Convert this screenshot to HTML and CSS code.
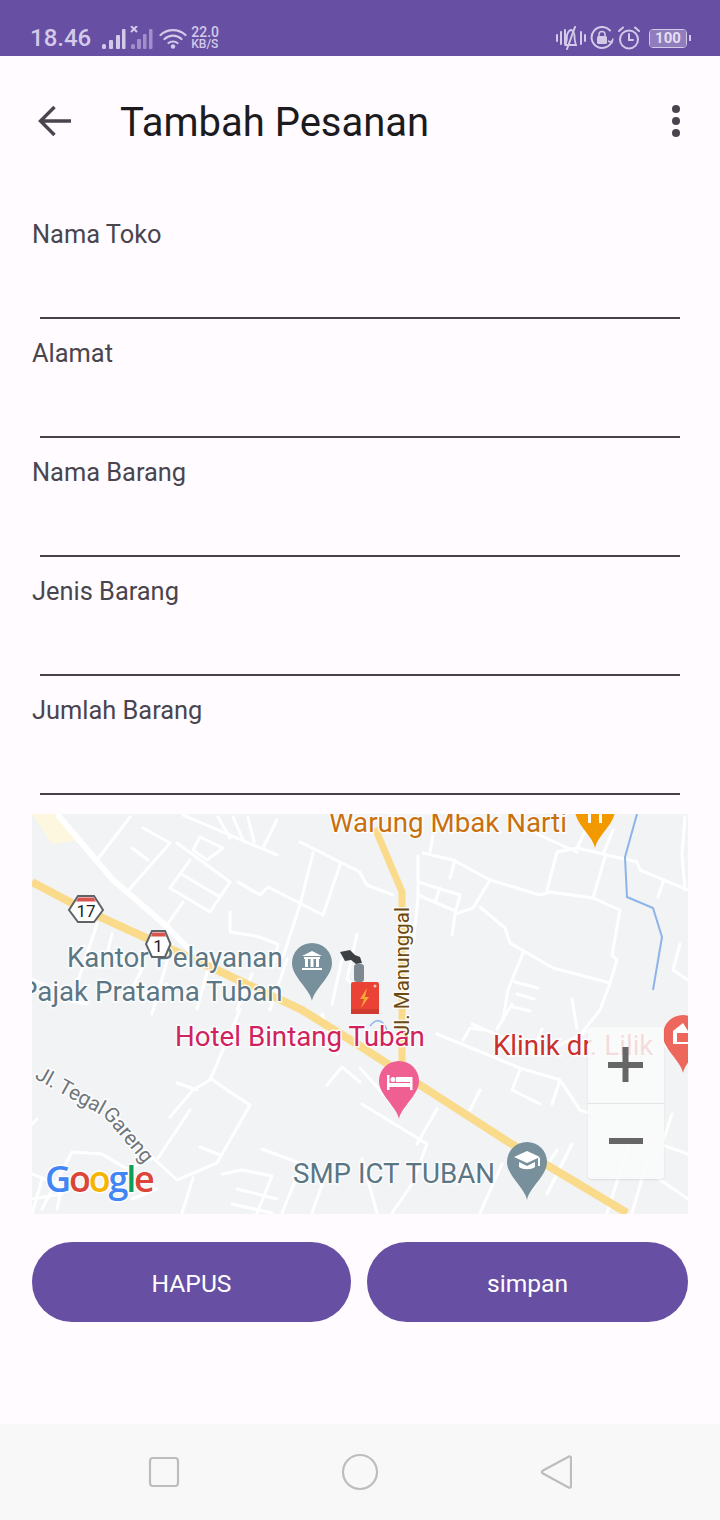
FILE: index.html
```html
<!DOCTYPE html>
<html lang="en">
<head>
    <meta charset="UTF-8">
    <meta name="viewport" content="width=device-width, initial-scale=1.0">
    <title>Tambah Pesanan</title>
    <link rel="stylesheet" href="styles.css">
</head>
<body>
    <div class="status-bar">
        <div class="status-left">
            <span class="status-time">18.46</span>
            <svg class="status-signal" width="52" height="24" viewBox="0 0 52 24">
                <g fill="#d3c9e8">
                    <rect x="1" y="18" width="4" height="5" rx="1.5"/>
                    <rect x="8" y="14" width="4" height="9" rx="1"/>
                    <rect x="15" y="9" width="4" height="14" rx="1"/>
                    <rect x="21" y="3" width="3.5" height="20" rx="1"/>
                </g>
                <path d="M30 0l6 6M36 0l-6 6" stroke="#d3c9e8" stroke-width="2"/>
                <g fill="#a08fc8">
                    <rect x="30" y="18" width="4" height="5" rx="1.5"/>
                    <rect x="36" y="13" width="4" height="10" rx="1"/>
                    <rect x="42" y="8" width="3.5" height="15" rx="1"/>
                    <rect x="48" y="3" width="3.5" height="20" rx="1"/>
                </g>
            </svg>
            <svg class="status-wifi" width="28" height="22" viewBox="0 0 28 22">
                <path d="M1.5 8C8.5 1.5 19.500 1.500 26.500 8M5.500 12C10.500 7.500 17.500 7.500 22.500 12M9.500 16C12 14 16 14 18.500 16" fill="none" stroke="#d3c9e8" stroke-width="2.200" stroke-linecap="round"/>
                <circle cx="14" cy="19.500" r="2.200" fill="#d3c9e8"/>
            </svg>
            <div class="status-speed"><span>22.0</span><span class="status-unit">KB/S</span></div>
        </div>
        <div class="status-right">
            <svg width="30" height="24" viewBox="0 0 30 24" fill="none" stroke="#d3c9e8" stroke-width="2" stroke-linecap="round">
                <path d="M1 9v6M5 6v12M9 4v14M25 6v12M29 9v6"/>
                <path d="M11 19h9c-1-3-1.500-4-1.500-9c0-3-2-6-3.500-6s-4 3-4 6c0 5-.5 6-1.500 9z" stroke-width="1.800"/>
                <path d="M19 1L11 23"/>
            </svg>
            <svg width="24" height="24" viewBox="0 0 24 24" fill="none" stroke="#d3c9e8" stroke-width="2">
                <path d="M22 15A10.500 10.500 0 1 1 20 4.500" stroke-linecap="round"/>
                <path d="M18 15l4 1.500 1-4" stroke-width="1.500"/>
                <rect x="7" y="10" width="10" height="8" rx="1.500" fill="#d3c9e8" stroke="none"/>
                <path d="M9 10V8.500a3 3 0 0 1 6 0V10" stroke-width="1.500"/>
            </svg>
            <svg width="22" height="24" viewBox="0 0 22 24" fill="none" stroke="#d3c9e8" stroke-width="2" stroke-linecap="round">
                <circle cx="11" cy="13.500" r="9"/>
                <path d="M11 8v6h4M1 5l4-3.500M21 5l-4-3.500"/>
            </svg>
            <div class="battery"><span class="battery-level">100</span></div>
        </div>
    </div>

    <header class="toolbar">
        <svg class="toolbar-back" width="34" height="32" viewBox="0 0 34 32" fill="none" stroke="#49454f" stroke-width="3.400">
            <path d="M33 16H3M16.500 2L2.500 16l14 14"/>
        </svg>
        <h1 class="toolbar-title">Tambah Pesanan</h1>
        <div class="toolbar-menu"><i></i><i></i><i></i></div>
    </header>

    <main class="content">
        <div class="field">
            <label for="nama-toko">Nama Toko</label>
            <input type="text" id="nama-toko">
        </div>
        <div class="field">
            <label for="alamat">Alamat</label>
            <input type="text" id="alamat">
        </div>
        <div class="field">
            <label for="nama-barang">Nama Barang</label>
            <input type="text" id="nama-barang">
        </div>
        <div class="field">
            <label for="jenis-barang">Jenis Barang</label>
            <input type="text" id="jenis-barang">
        </div>
        <div class="field">
            <label for="jumlah-barang">Jumlah Barang</label>
            <input type="text" id="jumlah-barang">
        </div>

        <div class="map">
            <svg class="map-canvas" width="656" height="400" viewBox="0 0 656 400">
                <defs>
                    <path id="pin" d="M20 58C18 46 0 34 0 20A20 20 0 0 1 40 20C40 34 22 46 20 58Z"/>
                </defs>
                <path class="road-fade" d="M0 0L22 0L50 26L20 30Z"/>
                <!-- small streets -->
                <g class="roads">
                    <path d="M151 1L245 41M98 3L65 46M111 14L138 29L95 78M145 29L198 68L178 98L138 74L158 46M168 23L191 34L175 46L161 36Z"/>
                    <path d="M151 61L188 83M100 34L116 46M206 68L228 81L236 73L291 101M268 28L328 58M281 39L268 91L251 143M308 51L291 101"/>
                    <path d="M198 98L198 118L224 122L246 130L241 153M151 88L135 111M186 3L198 24M201 3L212 28M216 3L222 28M245 6L232 32"/>
                    <path d="M391 39L421 46L458 66L508 81L518 78L561 84L588 96L580 141L585 146L578 169L568 196L545 225"/>
                    <path d="M525 38L545 34L605 48L608 56L656 76M525 38L515 76M573 43L561 84M386 42L386 84L381 130"/>
                    <path d="M386 68L428 81L423 100L441 94L458 66M386 81L421 96M408 74L403 88M423 46L418 64M423 101L420 121"/>
                    <path d="M448 93L473 114L478 129L521 154L578 169M491 139L476 176L471 206M483 168L506 174M485 180L502 185M481 193L498 197"/>
                    <path d="M328 59L335 71L361 81M401 22L398 38M505 20L545 38M545 34L555 13M571 40L581 16M653 3L650 40L653 76M648 130L641 156L656 166M631 68L626 83"/>
                    <path d="M208 196L178 266L161 276L138 303M145 269L165 276M178 264L198 278L218 291L185 349L145 366L121 344M158 296L126 344M168 333L188 341M161 364L150 399"/>
                    <path d="M121 344L95 355L70 340L40 338L10 395M0 360L30 372L25 395M295 271L310 253L328 268M0 310L5 305"/>
                    <path d="M405 220L488 254L528 266L548 296L560 300M448 276L438 296M431 226L438 214L451 216M488 256L480 276L508 290M528 266L520 290"/>
                    <path d="M328 254L360 290M330 290L395 330L380 370L360 399M405 295L385 330M330 345L345 399M298 349L280 399M230 335L270 350L250 399"/>
                    <path d="M525 336L500 375M540 330L515 380M560 296L600 320L575 399M600 320L656 340M620 330L600 399M640 300L620 360L656 385M470 350L448 399"/>
                    <path d="M0 165L15 172M30 185L55 190M65 110L45 170M80 120L75 140L110 155L100 175M100 186L135 170M140 130L120 200"/>
                    <path d="M180 140L165 195M220 160L205 196M255 145L238 196M290 200L305 240M310 145L300 190M325 120L315 165L335 185"/>
                    <path d="M440 210L510 240L560 215M480 190L465 215M510 215L500 240M540 185L545 215M600 220L656 240"/>
                    <path d="M190 360L210 356L240 362L225 399M205 375L245 385M200 390L240 399M10 365L0 400M0 385L30 380M100 385L125 375"/>
                </g>
                <path class="road-wide" d="M25 0L81 66L131 109L162 140"/>
                <path class="water" d="M605 0L593 43L595 83L621 94L630 123L621 176"/>
                <path class="water-small" d="M338 212C344 204 352 204 356 220"/>
                <path class="road-main-side" d="M343 14L370 78V260"/>
                <path class="road-main" d="M0 68L53 96L125 129L185 156L270 196L328 232L388 271L478 329L595 399"/>

                <!-- place pins -->
                <use href="#pin" transform="translate(260 129)" fill="#78909c"/>
                <path d="M280 137L270 142H290ZM272 143H288V145H272ZM273 145H276V153H273ZM278.500 145H281.500V153H278.500ZM284 145H287V153H284ZM270 154H290V156H270Z" fill="#fff"/>
                <use href="#pin" transform="translate(347 247)" fill="#ef5f92"/>
                <path d="M355 261H357.500V276H355ZM378 263H380.500V276H378ZM357.500 269H378V273H357.500ZM364 263H378V268H364Z" fill="#fff"/>
                <circle cx="361" cy="265.500" r="2.500" fill="#fff"/>
                <use href="#pin" transform="translate(475 328)" fill="#78909c"/>
                <path d="M495 337L508 343L495 349L482 343ZM487 348V353C491 356 499 356 503 353V348L495 352ZM506 344H508V352H506Z" fill="#fff"/>
                <use href="#pin" transform="translate(631 201)" fill="#ee675c"/>
                <path d="M651 209L641 217V230H656V217ZM645 219H656V228H645Z" fill="#fff"/>
                <path d="M646 222.500H656M651 219V228" stroke="#ee675c" stroke-width="1.500" fill="none"/>
                <use href="#pin" transform="translate(543 -24)" fill="#f29900"/>
                <path d="M556 0H559V9H556ZM567 0H570V9H567Z" fill="#fff"/>

                <!-- marker -->
                <g class="marker">
                    <path d="M308 138L318 136L323 141L328 143L330 149L324 150L319 146L313 147Z" fill="#3c4043"/>
                    <rect x="322" y="150" width="10" height="18" rx="3" fill="#7d8890"/>
                    <rect x="319" y="168" width="28" height="32" rx="2" fill="#ea4335"/>
                    <rect x="319" y="195" width="28" height="5" fill="#cf3b2f"/>
                    <path d="M335 174L328 185H332L329 194L337 183H333Z" fill="#f6a638"/>
                    <circle cx="343" cy="172" r="1.500" fill="#f5c9c5"/>
                </g>

                <!-- labels -->
                <text class="label label-poi" x="35" y="153">Kantor Pelayanan</text>
                <text class="label label-poi" x="-12" y="187">Pajak Pratama Tuban</text>
                <text class="label label-hotel" x="143" y="232">Hotel Bintang Tuban</text>
                <text class="label label-clinic" x="461" y="241">Klinik dr. Lilik</text>
                <text class="label label-poi" x="261" y="369">SMP ICT TUBAN</text>
                <text class="label label-food" x="297" y="18">Warung Mbak Narti</text>
                <text class="label label-road" transform="translate(377 222) rotate(-90)">Jl. Manunggal</text>
                <text class="label label-street" transform="translate(2 264) rotate(29)">Jl. Tegal</text>
                <text class="label label-street" transform="translate(70 300) rotate(50)">Gareng</text>
                <text class="google" x="13" y="378"><tspan fill="#4285f4">G</tspan><tspan fill="#db4437">o</tspan><tspan fill="#f4b400">o</tspan><tspan fill="#4285f4">g</tspan><tspan fill="#0f9d58">l</tspan><tspan fill="#db4437">e</tspan></text>

                <!-- route shields -->
                <g transform="translate(36 82)">
                    <path class="shield" d="M10 0H26L35 14L26 26H10L1 14Z"/>
                    <path class="shield-top" d="M10.500 1.500H25.500L28 5.500H8Z"/>
                    <text class="shield-text" x="18" y="21">17</text>
                </g>
                <g transform="translate(113 117)">
                    <path class="shield" d="M7 0H20L25.500 13L20 26H7L1 13Z"/>
                    <path class="shield-top" d="M7.500 1.500H19.500L21 5.500H6Z"/>
                    <text class="shield-text" x="13" y="21">1</text>
                </g>
            </svg>
            <div class="map-zoom">
                <button class="zoom-btn" type="button" aria-label="Zoom in">
                    <svg width="36" height="36" viewBox="0 0 36 36"><path d="M0 18H35M17.500 0V35" stroke="#666" stroke-width="6"/></svg>
                </button>
                <button class="zoom-btn" type="button" aria-label="Zoom out">
                    <svg width="36" height="36" viewBox="0 0 36 36"><path d="M1 18H35" stroke="#666" stroke-width="6"/></svg>
                </button>
            </div>
        </div>

        <div class="actions">
            <button class="action action-delete" type="button">HAPUS</button>
            <button class="action action-save" type="button">simpan</button>
        </div>
    </main>

    <nav class="nav-bar">
        <svg width="32" height="32" viewBox="0 0 32 32"><rect x="2" y="2" width="28" height="28" rx="3" fill="none" stroke="#bdbdbd" stroke-width="2.200"/></svg>
        <svg width="38" height="38" viewBox="0 0 38 38"><circle cx="19" cy="19" r="17" fill="none" stroke="#bdbdbd" stroke-width="2.200"/></svg>
        <svg width="32" height="36" viewBox="0 0 32 36"><path d="M29 2.500C30 2 31 3 31 4V32C31 33.500 30 34 28.500 33.500L3 19.500C1.500 18.500 1.500 17.500 3 16.500Z" fill="none" stroke="#bdbdbd" stroke-width="2.200"/></svg>
    </nav>
</body>
</html>
```
FILE: styles.css
```css
* {
    box-sizing: border-box;
}

body {
    font-family: Roboto, 'Liberation Sans', sans-serif;
    background-color: #FFFBFE;
    margin: 0;
    width: 720px;
    height: 1520px;
    display: flex;
    flex-direction: column;
    overflow: hidden;
}

/* status bar */
.status-bar {
    height: 56px;
    flex: none;
    background-color: #674FA3;
    color: #D3C9E8;
    display: flex;
    justify-content: space-between;
    align-items: center;
    padding: 20px 30px 0;
}

.status-left,
.status-right {
    display: flex;
    align-items: center;
}

.status-time {
    font-size: 24px;
    font-weight: 500;
    margin-right: 10px;
}

.status-signal {
    margin-right: 6px;
}

.status-wifi {
    margin-right: 4px;
}

.status-speed {
    display: flex;
    flex-direction: column;
    font-size: 14px;
    line-height: 13px;
    font-weight: 500;
}

.status-unit {
    font-size: 12px;
    line-height: 11px;
}

.status-right {
    gap: 4px;
    margin-right: 3px;
}

.battery {
    width: 38px;
    height: 19px;
    border: 1.500px solid #D3C9E8;
    border-radius: 4px;
    margin-left: 5px;
    position: relative;
}

.battery::after {
    content: "";
    position: absolute;
    right: -5px;
    top: 5px;
    width: 2px;
    height: 6px;
    background-color: #D3C9E8;
}

.battery-level {
    display: block;
    height: 100%;
    background-color: #8F7DBD;
    color: #E4DEF2;
    font-size: 15px;
    line-height: 16px;
    font-weight: 700;
    text-align: center;
    border-radius: 2px;
}

/* toolbar */
.toolbar {
    height: 144px;
    flex: none;
    display: flex;
    align-items: center;
    padding: 0 0 14px 38px;
}

.toolbar-back {
    flex: none;
}

.toolbar-title {
    font-size: 40px;
    font-weight: 400;
    color: #1C1B1F;
    margin: 2px 0 0 48px;
}

.toolbar-menu {
    margin-left: auto;
    margin-right: 40px;
    display: flex;
    flex-direction: column;
    gap: 4px;
}

.toolbar-menu i {
    display: block;
    width: 8px;
    height: 8px;
    border-radius: 50%;
    background-color: #49454F;
}

/* form */
.content {
    padding: 0 32px;
    flex: 1;
}

.field {
    height: 119px;
    padding-top: 18px;
    display: flex;
    flex-direction: column;
}

.field label {
    font-size: 25.4px;
    line-height: 32px;
    color: #49454F;
}

.field input {
    display: block;
    width: 640px;
    margin: auto 0 0 8px;
    height: 40px;
    border: none;
    border-bottom: 2px solid #45424A;
    background: transparent;
    outline: none;
}

/* map */
.map {
    width: 656px;
    height: 400px;
    margin-top: 19px;
    position: relative;
    background-color: #F1F3F5;
    overflow: hidden;
}

.map-canvas {
    display: block;
}

.roads {
    fill: none;
    stroke: #FFFFFF;
    stroke-width: 3;
    stroke-linejoin: round;
    stroke-linecap: round;
}

.road-fade {
    fill: #FEF7E0;
}

.road-wide {
    fill: none;
    stroke: #FFFFFF;
    stroke-width: 6;
}

.road-main {
    fill: none;
    stroke: #FADB8C;
    stroke-width: 8;
}

.road-main-side {
    fill: none;
    stroke: #FADB8C;
    stroke-width: 7;
}

.water {
    fill: none;
    stroke: #8DB4E8;
    stroke-width: 2;
}

.water-small {
    fill: none;
    stroke: #8DB4E8;
    stroke-width: 1.500;
}

.marker {
    filter: blur(0.5px);
}

.shield {
    fill: #FFFFFF;
    stroke: #5F6368;
    stroke-width: 2;
}

.shield-top {
    fill: #D9534F;
}

.shield-text {
    font-size: 17px;
    fill: #202124;
    text-anchor: middle;
}

.label {
    font-size: 27.7px;
    paint-order: stroke;
    stroke: rgba(255, 255, 255, 0.85);
    stroke-width: 3px;
}

.label-poi {
    fill: #5B7684;
}

.label-hotel {
    fill: #D0225F;
}

.label-clinic {
    fill: #C9302C;
}

.label-food {
    fill: #C9700E;
}

.label-road {
    font-size: 20.5px;
    fill: #6A4A12;
}

.label-street {
    font-size: 20.5px;
    fill: #70757A;
}

.google {
    font-family: 'Open Sans', sans-serif;
    font-size: 36px;
    font-weight: 600;
    letter-spacing: -2.2px;
    paint-order: stroke;
    stroke: rgba(255, 255, 255, 0.8);
    stroke-width: 3px;
}

.map-zoom {
    position: absolute;
    top: 213px;
    left: 556px;
    width: 76px;
    height: 152px;
    background-color: rgba(250, 250, 250, 0.85);
    border-radius: 3px;
    box-shadow: 0 1px 2px rgba(0, 0, 0, 0.1);
    display: flex;
    flex-direction: column;
}

.zoom-btn {
    flex: 1;
    background: none;
    border: none;
    padding: 0;
    display: flex;
    align-items: center;
    justify-content: center;
}

.zoom-btn + .zoom-btn {
    border-top: 1px solid #E4E4E4;
}

/* buttons */
.actions {
    display: flex;
    gap: 16px;
    margin-top: 28px;
}

.action {
    height: 80px;
    border: none;
    border-radius: 40px;
    background-color: #674FA3;
    color: #FFFFFF;
    font-family: inherit;
    font-size: 24.6px;
    padding: 3px 0 0;
}

.action-delete {
    width: 319px;
}

.action-save {
    width: 321px;
}

/* navigation */
.nav-bar {
    height: 96px;
    flex: none;
    background-color: #F8F8F8;
    display: grid;
    grid-template-columns: 196px 196px 196px;
    justify-content: center;
    justify-items: center;
    align-items: center;
}
```
